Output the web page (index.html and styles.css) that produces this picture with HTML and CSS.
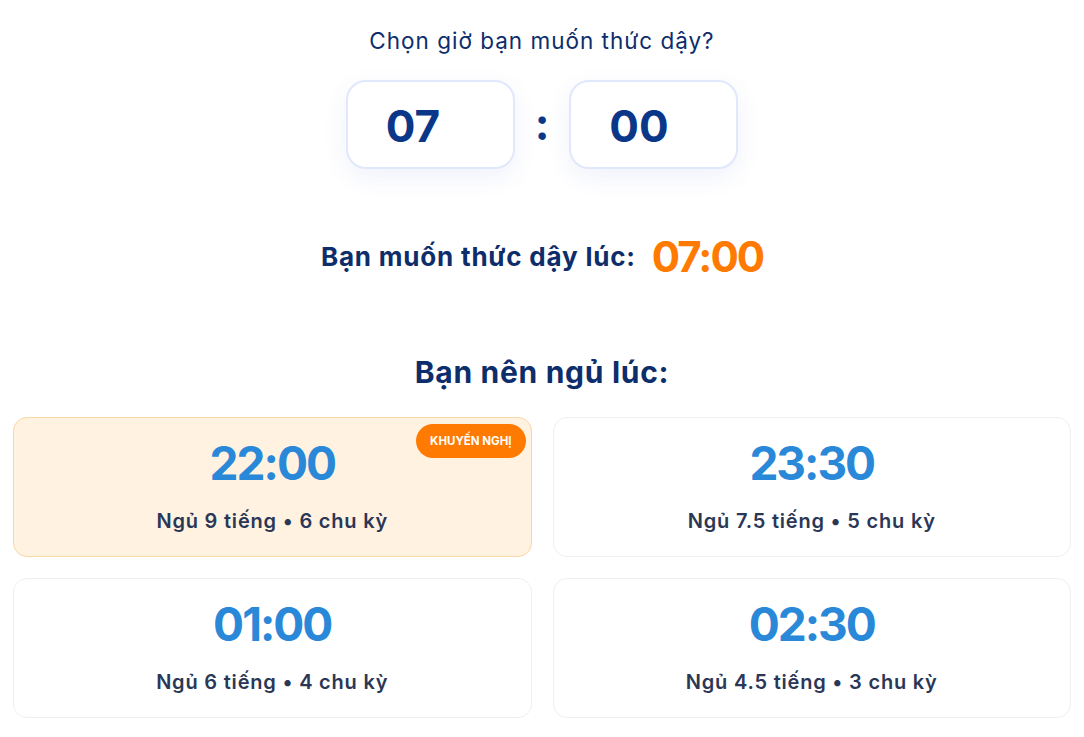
FILE: index.html
```html
<!DOCTYPE html>
<html lang="vi">
<head>
<meta charset="utf-8">
<title>Tính giờ ngủ</title>
<link rel="stylesheet" href="styles.css">
</head>
<body>
<main class="page">
  <section class="picker">
    <h2 class="picker-title">Chọn giờ bạn muốn thức dậy?</h2>
    <div class="picker-row">
      <div class="time-box">07</div>
      <span class="colon">:</span>
      <div class="time-box">00</div>
    </div>
  </section>

  <p class="wake">Bạn muốn thức dậy lúc: <span class="wake-time">07:00</span></p>

  <h2 class="result-title">Bạn nên ngủ lúc:</h2>

  <div class="grid">
    <div class="card card-rec">
      <span class="badge">KHUYẾN NGHỊ</span>
      <div class="card-time">22:00</div>
      <div class="card-info">Ngủ 9 tiếng • 6 chu kỳ</div>
    </div>
    <div class="card">
      <div class="card-time">23:30</div>
      <div class="card-info">Ngủ 7.5 tiếng • 5 chu kỳ</div>
    </div>
    <div class="card">
      <div class="card-time">01:00</div>
      <div class="card-info">Ngủ 6 tiếng • 4 chu kỳ</div>
    </div>
    <div class="card">
      <div class="card-time">02:30</div>
      <div class="card-info">Ngủ 4.5 tiếng • 3 chu kỳ</div>
    </div>
  </div>
</main>
</body>
</html>
```

FILE: styles.css
```css
* { box-sizing: border-box; }
html, body { margin: 0; padding: 0; background: #ffffff; }
body {
  font-family: "Inter", "Noto Sans", "DejaVu Sans", sans-serif;
  color: #0d2d6b;
}
.page {
  padding: 24px 13px 20px;
  display: flex;
  flex-direction: column;
  align-items: center;
}
.picker { display: flex; flex-direction: column; align-items: center; }
.picker-title {
  margin: 0;
  font-size: 22.5px;
  font-weight: 400;
  letter-spacing: 1px;
  color: #0d2d6b;
  line-height: 34px;
}
.picker-row {
  margin-top: 22px;
  display: flex;
  align-items: center;
  gap: 20px;
}
.time-box {
  width: 169px;
  height: 89px;
  border: 2px solid #e2e8fb;
  border-radius: 20px;
  background: #fff;
  box-shadow: 0 8px 24px rgba(60, 90, 200, 0.08);
  display: flex;
  align-items: center;
  padding-left: 38px;
  padding-top: 3px;
  font-size: 44px;
  font-weight: 700;
  color: #0b3789;
}
.colon {
  font-size: 44px;
  font-weight: 700;
  color: #0b3789;
  line-height: 1;
  margin-top: -2px;
}
.wake {
  margin: 62px 0 0;
  font-size: 26px;
  font-weight: 700;
  letter-spacing: 0.8px;
  color: #0d2d6b;
  display: flex;
  align-items: center;
  gap: 16px;
}
.wake-time {
  font-size: 42px;
  letter-spacing: -2px;
  color: #ff7a00;
}
.result-title {
  margin: 70px 0 0;
  font-size: 30px;
  font-weight: 700;
  letter-spacing: 0.7px;
  color: #0d2d6b;
  line-height: 40px;
}
.grid {
  margin-top: 25px;
  width: 100%;
  display: grid;
  grid-template-columns: 1fr 1fr;
  gap: 21px;
}
.card {
  position: relative;
  height: 140px;
  border: 1px solid #eeeff2;
  border-radius: 14px;
  background: #fff;
  display: flex;
  flex-direction: column;
  align-items: center;
  padding-top: 17px;
}
.card-rec {
  background: #fff2e1;
  border-color: #f8d7a6;
}
.card-time {
  font-size: 46px;
  font-weight: 700;
  letter-spacing: -2px;
  color: #2a88d8;
  line-height: 56px;
}
.card-info {
  margin-top: 18px;
  font-size: 20px;
  font-weight: 600;
  letter-spacing: 0.8px;
  color: #2b3756;
}
.badge {
  position: absolute;
  top: 6px;
  right: 5px;
  background: #ff7a00;
  color: #fff;
  font-size: 11.5px;
  font-weight: 700;
  padding: 10px 14px;
  border-radius: 18px;
  line-height: 14px;
}
```
